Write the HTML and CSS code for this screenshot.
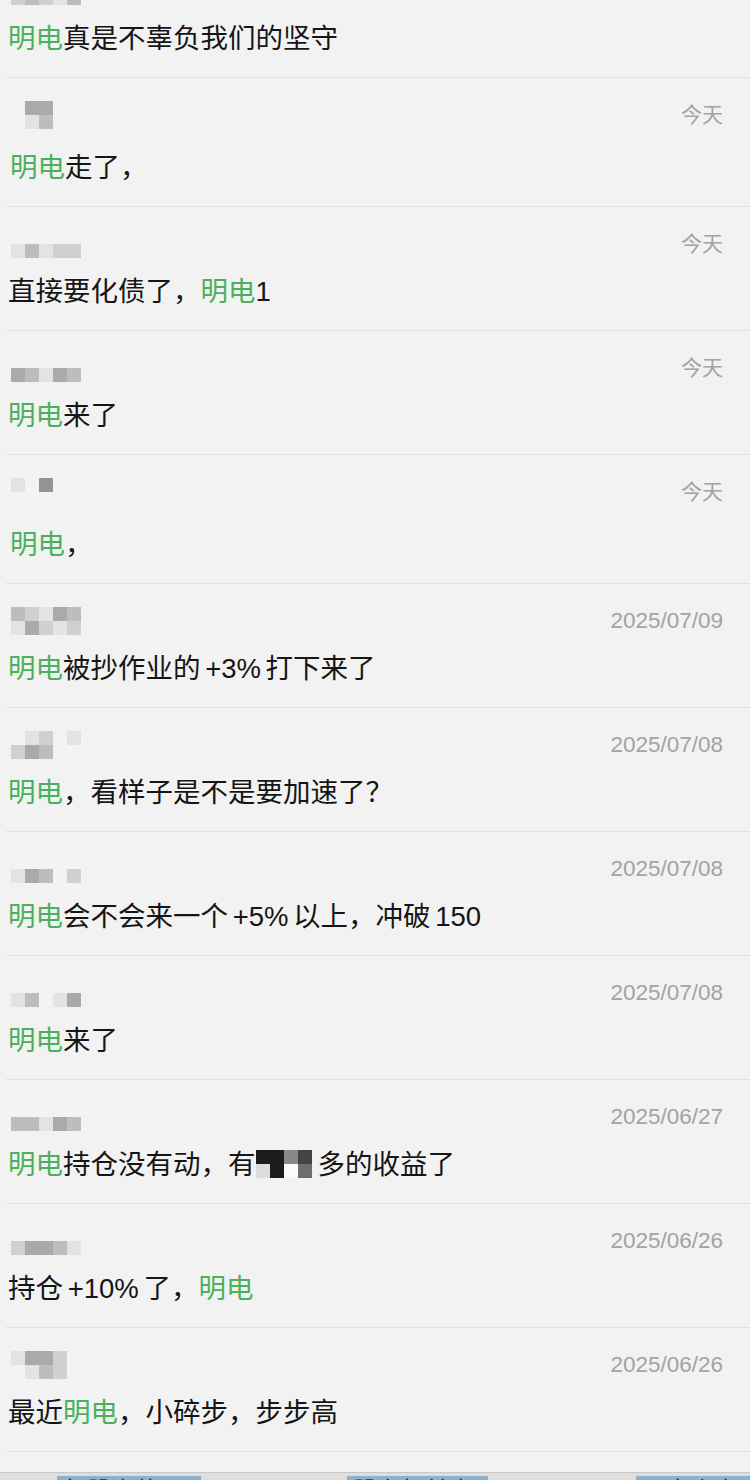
FILE: index.html
```html
<!DOCTYPE html>
<html lang="zh-CN">
<head>
  <meta charset="UTF-8">
  <title>评论</title>
  <meta name="viewport" content="width=device-width, initial-scale=1.0">
  <link rel="stylesheet" href="styles.css">
</head>
<body>

<section class="comments">

  <div class="item">
    <div class="head">
      <div class="mosaic cols5"><i class="c1"></i><i class="c2"></i><i class="c1"></i><i class="c3"></i><i class="c1"></i><i class="c2"></i><i class="c3"></i><i class="c2"></i><i class="c1"></i><i class="c3"></i></div>
    </div>
    <p class="text"><em>明电</em>真是不辜负我们的坚守</p>
  </div>

  <div class="item wide">
    <div class="head">
      <div class="mosaic cols3"><i class="c0"></i><i class="c4"></i><i class="c4"></i><i class="c0"></i><i class="c1"></i><i class="c3"></i></div>
      <span class="date today">今天</span>
    </div>
    <p class="text"><em>明电</em>走了，</p>
  </div>

  <div class="item">
    <div class="head">
      <div class="mosaic cols5"><i class="c0"></i><i class="c0"></i><i class="c0"></i><i class="c0"></i><i class="c0"></i><i class="c1"></i><i class="c3"></i><i class="c1"></i><i class="c2"></i><i class="c2"></i></div>
      <span class="date today">今天</span>
    </div>
    <p class="text">直接要化债了，<em>明电</em>1</p>
  </div>

  <div class="item">
    <div class="head">
      <div class="mosaic cols5"><i class="c0"></i><i class="c0"></i><i class="c0"></i><i class="c0"></i><i class="c0"></i><i class="c4"></i><i class="c3"></i><i class="c1"></i><i class="c4"></i><i class="c3"></i></div>
      <span class="date today">今天</span>
    </div>
    <p class="text"><em>明电</em>来了</p>
  </div>

  <div class="item wide">
    <div class="head">
      <div class="mosaic cols3"><i class="c1"></i><i class="c0"></i><i class="c5"></i><i class="c0"></i><i class="c0"></i><i class="c0"></i></div>
      <span class="date today">今天</span>
    </div>
    <p class="text"><em>明电</em>，</p>
  </div>

  <div class="item">
    <div class="head">
      <div class="mosaic cols5"><i class="c3"></i><i class="c2"></i><i class="c1"></i><i class="c4"></i><i class="c3"></i><i class="c1"></i><i class="c4"></i><i class="c2"></i><i class="c1"></i><i class="c2"></i></div>
      <span class="date">2025/07/09</span>
    </div>
    <p class="text"><em>明电</em>被抄作业的 +3% 打下来了</p>
  </div>

  <div class="item">
    <div class="head">
      <div class="mosaic cols5"><i class="c0"></i><i class="c1"></i><i class="c2"></i><i class="c0"></i><i class="c1"></i><i class="c2"></i><i class="c4"></i><i class="c3"></i><i class="c0"></i><i class="c0"></i></div>
      <span class="date">2025/07/08</span>
    </div>
    <p class="text"><em>明电</em>，看样子是不是要加速了？</p>
  </div>

  <div class="item">
    <div class="head">
      <div class="mosaic cols5"><i class="c0"></i><i class="c0"></i><i class="c0"></i><i class="c0"></i><i class="c0"></i><i class="c1"></i><i class="c4"></i><i class="c3"></i><i class="c0"></i><i class="c2"></i></div>
      <span class="date">2025/07/08</span>
    </div>
    <p class="text"><em>明电</em>会不会来一个 +5% 以上，冲破 150</p>
  </div>

  <div class="item">
    <div class="head">
      <div class="mosaic cols5"><i class="c0"></i><i class="c0"></i><i class="c0"></i><i class="c0"></i><i class="c0"></i><i class="c1"></i><i class="c3"></i><i class="c0"></i><i class="c1"></i><i class="c4"></i></div>
      <span class="date">2025/07/08</span>
    </div>
    <p class="text"><em>明电</em>来了</p>
  </div>

  <div class="item">
    <div class="head">
      <div class="mosaic cols5"><i class="c0"></i><i class="c0"></i><i class="c0"></i><i class="c0"></i><i class="c0"></i><i class="c3"></i><i class="c3"></i><i class="c1"></i><i class="c4"></i><i class="c3"></i></div>
      <span class="date">2025/06/27</span>
    </div>
    <p class="text"><em>明电</em>持仓没有动，有<span class="mosaic inline cols4"><i class="d5"></i><i class="d5"></i><i class="d3"></i><i class="d4"></i><i class="d1"></i><i class="d5"></i><i class="d0"></i><i class="d2"></i></span>多的收益了</p>
  </div>

  <div class="item">
    <div class="head">
      <div class="mosaic cols5"><i class="c0"></i><i class="c0"></i><i class="c0"></i><i class="c0"></i><i class="c0"></i><i class="c2"></i><i class="c4"></i><i class="c4"></i><i class="c3"></i><i class="c1"></i></div>
      <span class="date">2025/06/26</span>
    </div>
    <p class="text">持仓 +10% 了，<em>明电</em></p>
  </div>

  <div class="item">
    <div class="head">
      <div class="mosaic cols5"><i class="c1"></i><i class="c4"></i><i class="c4"></i><i class="c2"></i><i class="c0"></i><i class="c0"></i><i class="c1"></i><i class="c3"></i><i class="c2"></i><i class="c0"></i></div>
      <span class="date">2025/06/26</span>
    </div>
    <p class="text">最近<em>明电</em>，小碎步，步步高</p>
  </div>

</section>

<section class="table-strip">
  <span class="cell"></span>
  <span class="cell key">每股净值</span>
  <span class="cell">1.5011</span>
  <span class="cell key">股东权益率</span>
  <span class="cell">77.02%</span>
  <span class="cell key">固定资产率</span>
</section>

</body>
</html>
```

FILE: styles.css
```css
* { box-sizing: border-box; }
body {
  margin: 0;
  background: #f2f2f2;
  color: #151515;
  font-family: "Liberation Sans", "Noto Sans CJK SC", sans-serif;
  overflow: hidden;
}

.comments { margin-top: -46px; }

.item {
  margin-left: 6px;
  padding: 23px 27px 20px 2px;
  border-bottom: 1px solid #e0e0e0;
}
.head {
  display: flex;
  justify-content: space-between;
  align-items: center;
  height: 28px;
}
.date {
  font-size: 22.5px;
  color: #a3a3a3;
  line-height: 28px;
}
.date.today { font-size: 21px; }
.text {
  margin: 16px 0 0;
  height: 36px;
  font-size: 27.5px;
  line-height: 36px;
  word-spacing: -3px;
  white-space: nowrap;
}
.text em { font-style: normal; color: #4bb05c; }
.wide .text { margin-top: 21px; padding-left: 2px; }

/* pixelated user names */
.mosaic { display: grid; grid-auto-rows: 14px; margin-left: 3px; }
.mosaic i { display: block; }
.cols3 { grid-template-columns: repeat(3, 14px); }
.cols4 { grid-template-columns: repeat(4, 14px); }
.cols5 { grid-template-columns: repeat(5, 14px); }
.c0 { background: #f3f3f3; }
.c1 { background: #e3e3e3; }
.c2 { background: #d0d0d0; }
.c3 { background: #bdbdbd; }
.c4 { background: #aaaaaa; }
.c5 { background: #949494; }

.mosaic.inline {
  display: inline-grid;
  vertical-align: middle;
  margin: -6px 6px 0 0;
}
.d0 { background: #fafafa; }
.d1 { background: #dcdcdc; }
.d2 { background: #6e6e6e; }
.d3 { background: #888; }
.d4 { background: #444; }
.d5 { background: #1c1c1c; }

/* table peeking in at the bottom */
.table-strip {
  margin-top: 20px;
  display: flex;
  height: 36px;
  padding-top: 3px;
  background: #dedede;
  border-top: 1px solid #c8c8c8;
  font-size: 24px;
  line-height: 30px;
  color: #333;
}
.cell { padding-left: 6px; }
.cell:nth-child(1) { width: 57px; }
.cell:nth-child(2) { width: 144px; }
.cell:nth-child(3) { width: 146px; }
.cell:nth-child(4) { width: 141px; }
.cell:nth-child(5) { width: 148px; }
.cell:nth-child(6) { flex: 1; }
.cell.key { background: #8fb1c9; }
```
